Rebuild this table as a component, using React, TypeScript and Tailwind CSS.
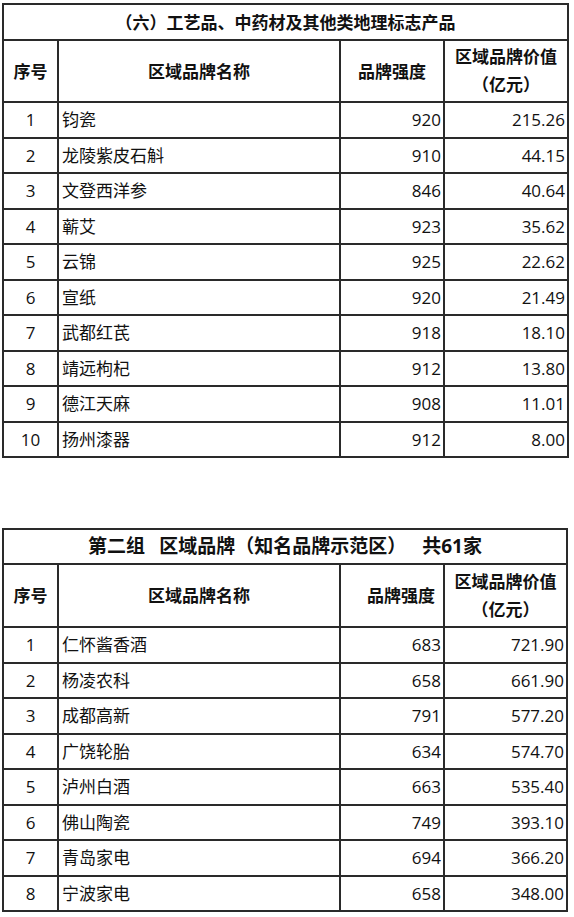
import React from "react";

type Row = [string, string, string, string];

const t1: Row[] = [
  ["1", "钧瓷", "920", "215.26"],
  ["2", "龙陵紫皮石斛", "910", "44.15"],
  ["3", "文登西洋参", "846", "40.64"],
  ["4", "蕲艾", "923", "35.62"],
  ["5", "云锦", "925", "22.62"],
  ["6", "宣纸", "920", "21.49"],
  ["7", "武都红芪", "918", "18.10"],
  ["8", "靖远枸杞", "912", "13.80"],
  ["9", "德江天麻", "908", "11.01"],
  ["10", "扬州漆器", "912", "8.00"],
];

const t2: Row[] = [
  ["1", "仁怀酱香酒", "683", "721.90"],
  ["2", "杨凌农科", "658", "661.90"],
  ["3", "成都高新", "791", "577.20"],
  ["4", "广饶轮胎", "634", "574.70"],
  ["5", "泸州白酒", "663", "535.40"],
  ["6", "佛山陶瓷", "749", "393.10"],
  ["7", "青岛家电", "694", "366.20"],
  ["8", "宁波家电", "658", "348.00"],
];

const cell = "border-2 border-[#2a2a2a] p-0";

function L() {
  return <span className="inline-block w-[1em] text-center">（</span>;
}
function R() {
  return <span className="inline-block w-[1em] text-center">）</span>;
}

function Table({
  title,
  rows,
  width,
  titleH,
  headH,
  strengthAlign,
}: {
  title: React.ReactNode;
  rows: Row[];
  width: string;
  titleH: string;
  headH: string;
  strengthAlign: string;
}) {
  return (
    <table className={`border-collapse table-fixed ${width}`}>
      <colgroup>
        <col className="w-[55px]" />
        <col className="w-[282px]" />
        <col className="w-[104px]" />
        <col />
      </colgroup>
      <tbody>
        <tr className={titleH}>
          <td colSpan={4} className={`${cell} text-center font-bold whitespace-nowrap`}>
            {title}
          </td>
        </tr>
        <tr className={headH}>
          <td className={`${cell} text-center font-bold`}>序号</td>
          <td className={`${cell} text-center font-bold`}>区域品牌名称</td>
          <td className={`${cell} font-bold ${strengthAlign}`}>品牌强度</td>
          <td className={`${cell} text-center font-bold leading-[28px]`}>
            <div>区域品牌价值</div>
            <div>
              <L />亿元<R />
            </div>
          </td>
        </tr>
        {rows.map((r) => (
          <tr key={r[0]} className="h-[35.5px]">
            <td className={`${cell} text-center`}>{r[0]}</td>
            <td className={`${cell} text-left pl-[3px]`}>{r[1]}</td>
            <td className={`${cell} text-right pr-[2px]`}>{r[2]}</td>
            <td className={`${cell} text-right pr-[2px]`}>{r[3]}</td>
          </tr>
        ))}
      </tbody>
    </table>
  );
}

export default function App() {
  return (
    <div
      className="w-[574px] h-[917px] bg-white text-[#111] text-[17px] leading-none pl-[2px] pt-[3px] overflow-hidden"
      style={{ fontFamily: "'Open Sans', 'Noto Sans CJK SC', sans-serif" }}
    >
      <Table
        title={
          <span>
            <L />六<R />工艺品、中药材及其他类地理标志产品
          </span>
        }
        rows={t1}
        width="w-[567px]"
        titleH="h-[36px]"
        headH="h-[62px]"
        strengthAlign="text-center"
      />
      <div className="h-[70px]" />
      <Table
        title={
          <span className="text-[19px]">
            第二组<span className="inline-block w-[14px]" />区域品牌<L />知名品牌示范区<R />
            <span className="inline-block w-[16px]" />共61家
          </span>
        }
        rows={t2}
        width="w-[566px]"
        titleH="h-[35px]"
        headH="h-[63px]"
        strengthAlign="text-right pr-[8px]"
      />
    </div>
  );
}
